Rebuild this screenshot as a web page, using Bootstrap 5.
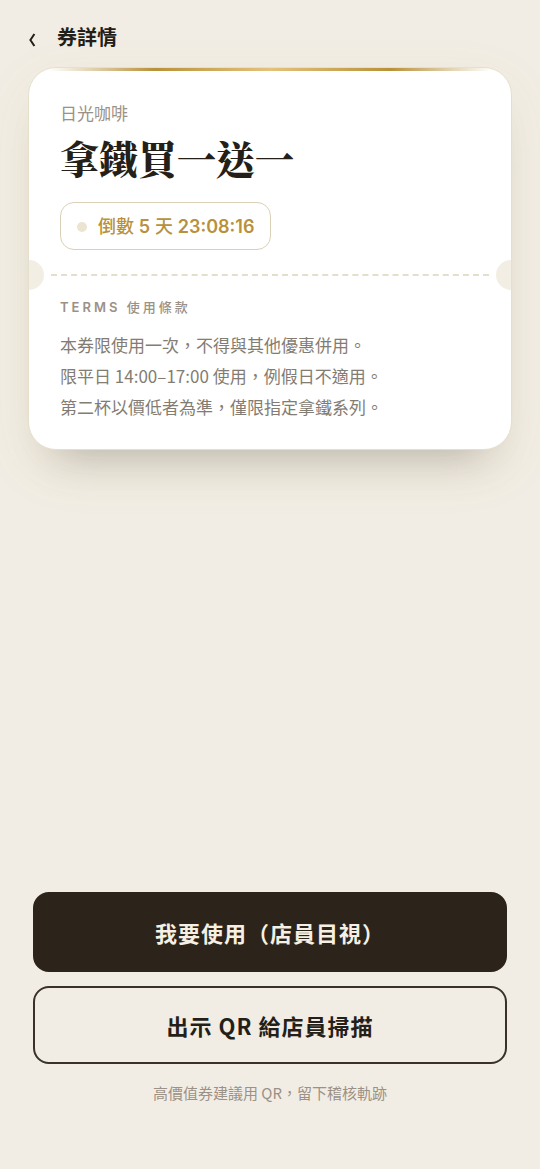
<!DOCTYPE html>
<html lang="zh-Hant">
<head>
<meta charset="utf-8">
<meta name="viewport" content="width=device-width, initial-scale=1">
<title>券詳情</title>
<link href="https://cdn.jsdelivr.net/npm/bootstrap@5.3.0/dist/css/bootstrap.min.css" rel="stylesheet">
<style>
  :root { --paper: #f2ede4; --ink: #2c241b; --gold: #b8913a; --line: #d9d0b5; --muted: #9b9186; }
  body { background: var(--paper); color: #241f18; font-family: "Noto Sans CJK TC", sans-serif; }
  .topbar { padding: 20px 28px 13px; gap: 20px; }
  .topbar h1 { font-size: 20px; line-height: 34px; font-weight: 700; }
  .back-link { color: inherit; padding-top: 6px; }
  .coupon { margin: 0 28px; border: 1px solid #e6dfcc; border-radius: 28px; background: #fff;
    box-shadow: 0 32px 40px -28px rgba(44, 36, 27, .28), 0 18px 56px rgba(150, 135, 60, .08); }
  .coupon-clip { border-radius: 27px; overflow: hidden; }
  .gold-bar { height: 3px; background: linear-gradient(90deg, transparent 4%, #b8913a 26%, #e2c27c 50%, #b8913a 75%, transparent 96%); }
  .coupon-head { padding: 28px 31px 10px; }
  .shop { color: var(--muted); font-size: 17px; line-height: 28px; }
  .coupon-title { font-family: "Noto Serif CJK TC", "Noto Sans CJK TC", serif; font-weight: 900; font-size: 39px; line-height: 50px; margin: 5px 0 20px; }
  .countdown { color: var(--gold); font-family: Inter, "Noto Sans CJK TC", sans-serif; font-size: 18px; line-height: 28px; font-weight: 500;
    border: 1px solid var(--line); border-radius: 14px; padding: 10px 16px 8px; gap: 11px; }
  .countdown b { font-weight: 600; }
  .dot { width: 10px; height: 10px; border-radius: 50%; background: #ebe4d1; }
  .notch { width: 15px; height: 30px; background: #f3eee3; }
  .notch-left { border-radius: 0 15px 15px 0; }
  .notch-right { border-radius: 15px 0 0 15px; }
  .tear-line { border-top: 2px dashed #e3dfcd; margin: 0 7px; }
  .terms { padding: 5px 31px 27px; }
  .terms h3 { font-family: Inter, "Noto Sans CJK TC", sans-serif; color: var(--muted); font-size: 13px; line-height: 24px; letter-spacing: 3px; font-weight: 500; margin-bottom: 10px; }
  .terms h3 b { font-weight: 600; }
  .terms p { color: #837c72; font-size: 17px; line-height: 31px; }
  .actions { padding: 0 33px 61px; gap: 14px; }
  .action-btn { border: 2px solid #3a3229; border-radius: 16px; font-size: 22px; line-height: 34px; font-weight: 700; letter-spacing: 1px; padding: 21px 16px; }
  .action-use, .action-use:hover { background: var(--ink); border-color: var(--ink); color: #f6f0e4; }
  .action-qr { color: #241f18; padding: 20px 16px; }
  .hint { color: var(--muted); font-size: 15px; line-height: 30px; }
</style>
</head>
<body>
<div class="d-flex flex-column min-vh-100">
  <header class="topbar d-flex align-items-center">
    <a href="#" class="back-link d-flex" aria-label="返回">
      <svg width="9" height="14" viewBox="0 0 9 14" fill="none" stroke="currentColor" stroke-width="2"><path d="M6.4 1 2.4 7 6.4 13"/></svg>
    </a>
    <h1 class="m-0">券詳情</h1>
  </header>
  <main class="flex-grow-1">
    <article class="coupon">
      <div class="coupon-clip">
        <div class="gold-bar"></div>
        <div class="coupon-head">
          <div class="shop">日光咖啡</div>
          <h2 class="coupon-title">拿鐵買一送一</h2>
          <div class="countdown d-inline-flex align-items-center"><span class="dot"></span><span>倒數 <b>5</b> 天 <b>23:08:16</b></span></div>
        </div>
        <div class="d-flex align-items-center">
          <span class="notch notch-left"></span>
          <div class="tear-line flex-grow-1"></div>
          <span class="notch notch-right"></span>
        </div>
        <section class="terms">
          <h3><b>TERMS</b> 使用條款</h3>
          <p class="m-0">本券限使用一次，不得與其他優惠併用。</p>
          <p class="m-0">限平日 14:00–17:00 使用，例假日不適用。</p>
          <p class="m-0">第二杯以價低者為準，僅限指定拿鐵系列。</p>
        </section>
      </div>
    </article>
  </main>
  <footer class="actions d-flex flex-column">
    <button type="button" class="btn action-btn action-use w-100">我要使用（店員目視）</button>
    <button type="button" class="btn action-btn action-qr w-100">出示 QR 給店員掃描</button>
    <p class="hint text-center m-0">高價值券建議用 QR，留下稽核軌跡</p>
  </footer>
</div>
<script src="https://cdn.jsdelivr.net/npm/bootstrap@5.3.0/dist/js/bootstrap.bundle.min.js"></script>
</body>
</html>
